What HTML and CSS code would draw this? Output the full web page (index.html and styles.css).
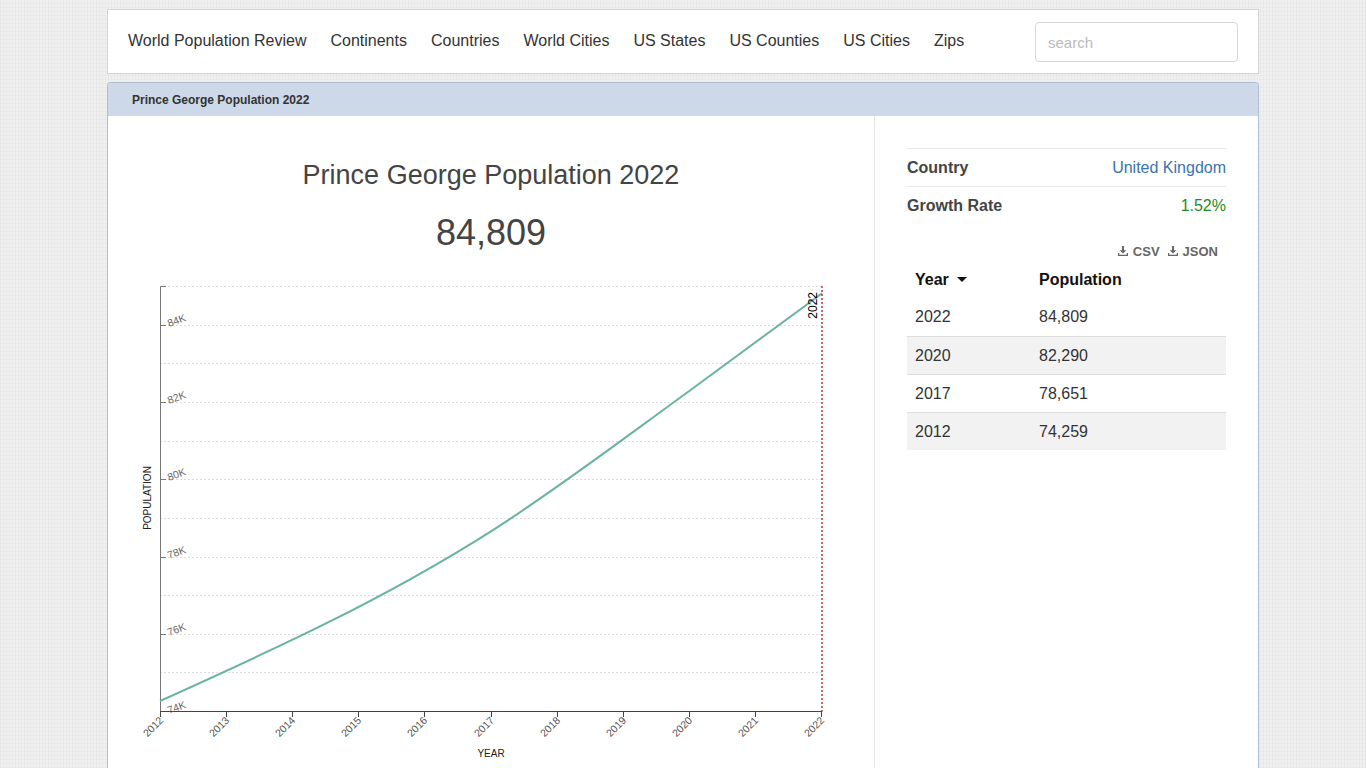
FILE: index.html
```html
<!DOCTYPE html>
<html lang="en">
<head>
<meta charset="utf-8">
<title>Prince George Population 2022</title>
<link rel="stylesheet" href="styles.css">
</head>
<body>
<div class="container">
  <nav class="navbar">
    <ul class="nav-links">
      <li>World Population Review</li>
      <li>Continents</li>
      <li>Countries</li>
      <li>World Cities</li>
      <li>US States</li>
      <li>US Counties</li>
      <li>US Cities</li>
      <li>Zips</li>
    </ul>
    <input class="search" type="text" placeholder="search">
  </nav>

  <section class="panel">
    <div class="panel-heading">Prince George Population 2022</div>
    <div class="panel-body">
      <div class="main-col">
        <h1 class="city-title">Prince George Population 2022</h1>
        <div class="city-pop">84,809</div>
        <svg class="chart" width="720" height="498" viewBox="130 270 720 498" xmlns="http://www.w3.org/2000/svg">
          <g class="grid" stroke="#dcdcdc" stroke-width="1" stroke-dasharray="2,2">
            <line x1="160" x2="822" y1="286.5" y2="286.5"/>
            <line x1="160" x2="822" y1="325.5" y2="325.5"/>
            <line x1="160" x2="822" y1="363.5" y2="363.5"/>
            <line x1="160" x2="822" y1="402.5" y2="402.5"/>
            <line x1="160" x2="822" y1="441.5" y2="441.5"/>
            <line x1="160" x2="822" y1="479.5" y2="479.5"/>
            <line x1="160" x2="822" y1="518.5" y2="518.5"/>
            <line x1="160" x2="822" y1="557.5" y2="557.5"/>
            <line x1="160" x2="822" y1="595.5" y2="595.5"/>
            <line x1="160" x2="822" y1="634.5" y2="634.5"/>
            <line x1="160" x2="822" y1="672.5" y2="672.5"/>
          </g>
          <g class="y-axis" font-family="Liberation Sans, Arial, sans-serif" font-size="10.5" fill="#666">
            <path d="M166,286.5H160.5V711.5H166" fill="none" stroke="#777"/>
            <g stroke="#777">
              <line x1="160" x2="166" y1="325.5" y2="325.5"/>
              <line x1="160" x2="166" y1="402.5" y2="402.5"/>
              <line x1="160" x2="166" y1="479.5" y2="479.5"/>
              <line x1="160" x2="166" y1="557.5" y2="557.5"/>
              <line x1="160" x2="166" y1="634.5" y2="634.5"/>
            </g>
            <text transform="translate(169,327) rotate(-20)">84K</text>
            <text transform="translate(169,404) rotate(-20)">82K</text>
            <text transform="translate(169,481) rotate(-20)">80K</text>
            <text transform="translate(169,559) rotate(-20)">78K</text>
            <text transform="translate(169,636) rotate(-20)">76K</text>
            <text transform="translate(169,714) rotate(-20)">74K</text>
          </g>
          <g class="x-axis" font-family="Liberation Sans, Arial, sans-serif" font-size="10.5" fill="#555">
            <line x1="160" x2="822.5" y1="711.5" y2="711.5" stroke="#444"/>
            <g stroke="#444">
              <line x1="160.5" x2="160.5" y1="711" y2="717"/>
              <line x1="226.5" x2="226.5" y1="711" y2="717"/>
              <line x1="292.5" x2="292.5" y1="711" y2="717"/>
              <line x1="358.5" x2="358.5" y1="711" y2="717"/>
              <line x1="424.5" x2="424.5" y1="711" y2="717"/>
              <line x1="491.5" x2="491.5" y1="711" y2="717"/>
              <line x1="557.5" x2="557.5" y1="711" y2="717"/>
              <line x1="623.5" x2="623.5" y1="711" y2="717"/>
              <line x1="689.5" x2="689.5" y1="711" y2="717"/>
              <line x1="755.5" x2="755.5" y1="711" y2="717"/>
              <line x1="821.5" x2="821.5" y1="711" y2="717"/>
            </g>
            <g text-anchor="end">
              <text transform="translate(164,721) rotate(-45)">2012</text>
              <text transform="translate(230,721) rotate(-45)">2013</text>
              <text transform="translate(296,721) rotate(-45)">2014</text>
              <text transform="translate(362,721) rotate(-45)">2015</text>
              <text transform="translate(428,721) rotate(-45)">2016</text>
              <text transform="translate(495,721) rotate(-45)">2017</text>
              <text transform="translate(561,721) rotate(-45)">2018</text>
              <text transform="translate(627,721) rotate(-45)">2019</text>
              <text transform="translate(693,721) rotate(-45)">2020</text>
              <text transform="translate(759,721) rotate(-45)">2021</text>
              <text transform="translate(825,721) rotate(-45)">2022</text>
            </g>
          </g>
          <text x="491" y="757" text-anchor="middle" font-family="Liberation Sans, Arial, sans-serif" font-size="10" fill="#222">YEAR</text>
          <text transform="translate(151,498) rotate(-90)" text-anchor="middle" font-family="Liberation Sans, Arial, sans-serif" font-size="10" fill="#222">POPULATION</text>
          <path d="M160,701 C270.3,651.2 380.7,601.3 491,531.3 C557.2,489.3 623.4,438.7 689.6,390.7 C733.7,358.7 777.9,326 822,293.3" fill="none" stroke="#69b3a2" stroke-width="2"/>
          <line x1="822" x2="822" y1="286" y2="711" stroke="#c0392b" stroke-width="1.5" stroke-dasharray="2,2"/>
          <text transform="translate(817,292) rotate(-90)" text-anchor="end" font-family="Liberation Sans, Arial, sans-serif" font-size="12" fill="#000">2022</text>
        </svg>
      </div>

      <aside class="side-col">
        <div class="info-row">
          <span class="info-label">Country</span>
          <span class="info-value link">United Kingdom</span>
        </div>
        <div class="info-row">
          <span class="info-label">Growth Rate</span>
          <span class="info-value growth">1.52%</span>
        </div>

        <div class="downloads">
          <span class="dl">
            <svg class="dl-icon" width="10" height="10" viewBox="0 0 10 10"><path d="M4 0h2v4.2h2.4L5 7.4 1.6 4.2H4z M0 7h1.3v1.7h7.4V7H10v3H0z" fill="#666"/></svg>CSV
          </span>
          <span class="dl">
            <svg class="dl-icon" width="10" height="10" viewBox="0 0 10 10"><path d="M4 0h2v4.2h2.4L5 7.4 1.6 4.2H4z M0 7h1.3v1.7h7.4V7H10v3H0z" fill="#666"/></svg>JSON
          </span>
        </div>

        <div class="pop-table">
          <div class="tr th">
            <span class="year-head">Year <i class="caret"></i></span>
            <span>Population</span>
          </div>
          <div class="tr first"><span>2022</span><span>84,809</span></div>
          <div class="tr shaded"><span>2020</span><span>82,290</span></div>
          <div class="tr"><span>2017</span><span>78,651</span></div>
          <div class="tr shaded"><span>2012</span><span>74,259</span></div>
        </div>
      </aside>
    </div>
  </section>
</div>
</body>
</html>
```

FILE: styles.css
```css
* {
  box-sizing: border-box;
}

html, body {
  margin: 0;
  padding: 0;
}

body {
  font-family: "Liberation Sans", Arial, sans-serif;
  color: #333;
  background-color: #f0f0f0;
  background-image:
    repeating-linear-gradient(90deg, rgba(0,0,0,0.028) 0 1px, transparent 1px 3px),
    repeating-linear-gradient(0deg, rgba(0,0,0,0.018) 0 1px, transparent 1px 4px);
  min-height: 768px;
}

.container {
  width: 1152px;
  margin: 0 auto;
  padding-top: 9px;
}

/* Navbar */
.navbar {
  height: 65px;
  background: #fff;
  border: 1px solid #d4d4d4;
  display: flex;
  align-items: center;
  justify-content: space-between;
  padding: 0 20px;
}

.nav-links {
  list-style: none;
  margin: 0;
  padding: 0;
  display: flex;
  gap: 24px;
  font-size: 16px;
  color: #333;
  margin-top: -2px;
}

.search {
  width: 203px;
  height: 40px;
  border: 1px solid #d6d6d6;
  border-radius: 4px;
  padding: 2px 12px 0;
  font-family: "Liberation Sans", Arial, sans-serif;
  font-size: 15px;
  color: #555;
  background: #fff;
  outline: none;
}

.search::placeholder {
  color: #bbb;
}

/* Panel */
.panel {
  margin-top: 8px;
  background: #fff;
  border: 1px solid #aebcd0;
  border-bottom: none;
  border-radius: 4px 4px 0 0;
}

.panel-heading {
  height: 33px;
  background: #cdd9e8;
  border-radius: 3px 3px 0 0;
  padding: 0 24px;
  font-size: 12px;
  font-weight: bold;
  color: #333;
  display: flex;
  align-items: center;
}

.panel-body {
  display: flex;
}

.main-col {
  width: 767px;
  border-right: 1px solid #e5e5e5;
  padding: 44px 0 0 22px;
}

.city-title {
  margin: 0;
  padding-right: 22px;
  font-size: 27px;
  line-height: 31px;
  font-weight: normal;
  color: #444;
  text-align: center;
}

.city-pop {
  margin-top: 21px;
  padding-right: 22px;
  font-size: 36px;
  line-height: 41px;
  color: #444;
  text-align: center;
}

.chart {
  display: block;
  margin-top: 17px;
}

/* Side column */
.side-col {
  flex: 1;
  padding: 32px 32px 0 32px;
}

.info-row {
  display: flex;
  justify-content: space-between;
  align-items: center;
  height: 38px;
  border-top: 1px solid #e8e8e8;
  font-size: 16px;
}

.info-label {
  font-weight: bold;
  color: #444;
}

.link {
  color: #3a73ad;
}

.growth {
  color: #1f8a1f;
}

.downloads {
  margin-top: 18px;
  height: 18px;
  display: flex;
  justify-content: flex-end;
  align-items: center;
  gap: 8px;
  padding-right: 8px;
  font-size: 13px;
  font-weight: bold;
  color: #666;
}

.dl {
  display: inline-flex;
  align-items: center;
  gap: 5px;
}

.pop-table {
  font-size: 16px;
}

.tr {
  display: grid;
  grid-template-columns: 124px 1fr;
  align-items: center;
  height: 38px;
  padding: 0 8px;
  border-top: 1px solid #dddddd;
  color: #333;
}

.tr.th,
.tr.first {
  border-top: none;
}

.tr.th {
  font-weight: bold;
  color: #111;
  padding-top: 1px;
}

.tr.shaded {
  background: #f2f2f2;
}

.year-head {
  display: inline-flex;
  align-items: center;
}

.caret {
  display: inline-block;
  width: 0;
  height: 0;
  margin-left: 8px;
  border-left: 5px solid transparent;
  border-right: 5px solid transparent;
  border-top: 5px solid #111;
}
```
